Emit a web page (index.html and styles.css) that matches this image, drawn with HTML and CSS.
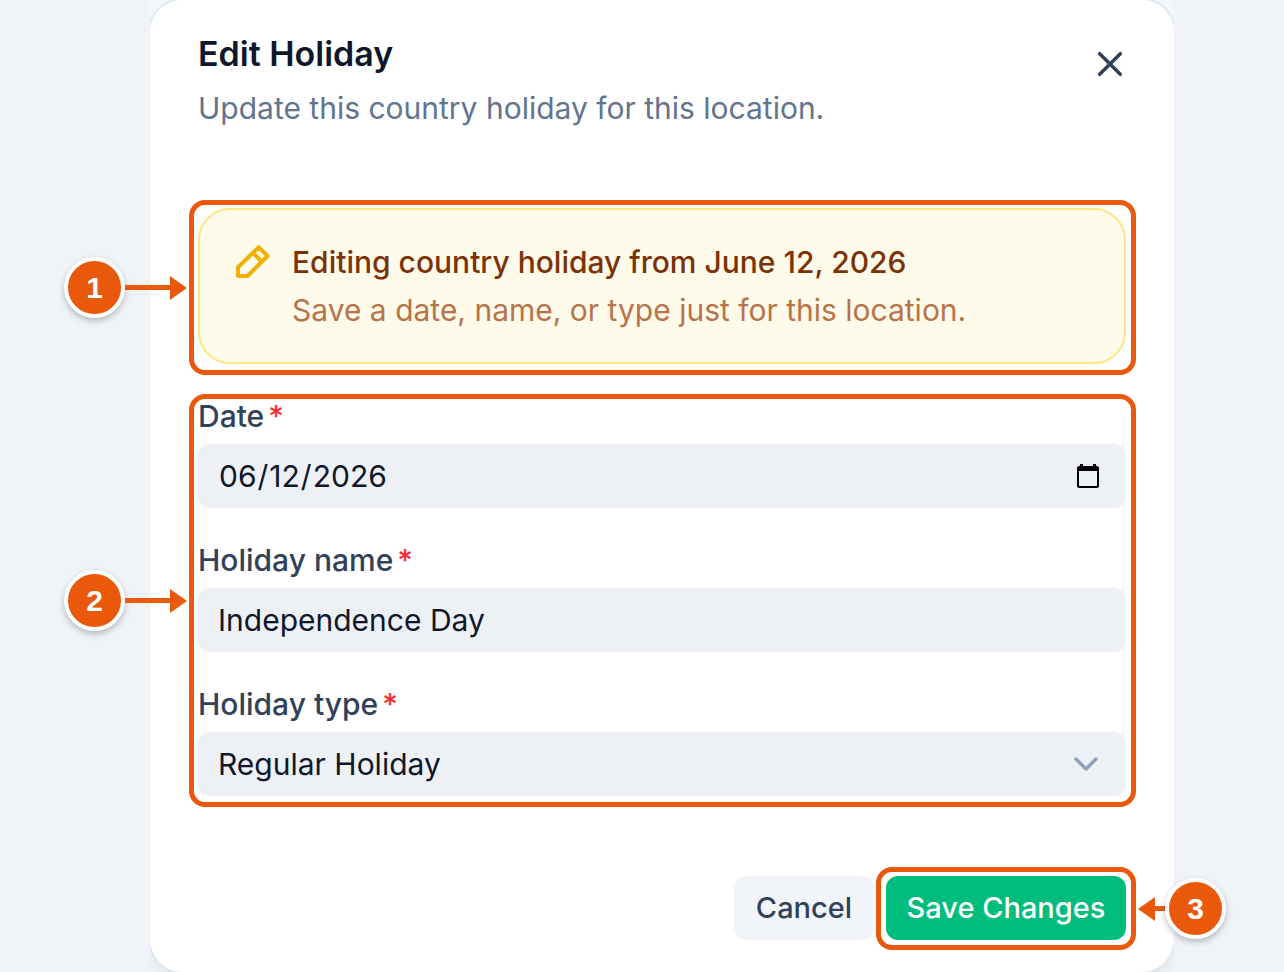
FILE: index.html
```html
<!DOCTYPE html>
<html lang="en">
<head>
    <meta charset="UTF-8">
    <meta name="viewport" content="width=device-width, initial-scale=1">
    <title>Edit Holiday</title>
    <link rel="stylesheet" href="styles.css">
</head>
<body>
    <main class="modal">
        <div class="modal-frame"></div>

        <header class="modal-header">
            <div>
                <h1>Edit Holiday</h1>
                <p>Update this country holiday for this location.</p>
            </div>
            <button type="button" class="close-btn" aria-label="Close">
                <svg width="26" height="26" viewBox="0 0 26 26" fill="none" stroke="currentColor" stroke-width="3.5" stroke-linecap="round"><path d="M2.7 2.7l20.6 20.6M23.3 2.7L2.7 23.3"/></svg>
            </button>
        </header>

        <form class="holiday-form">
            <!-- step 1: notice -->
            <div class="step">
                <div class="notice">
                    <svg class="notice-icon" width="34" height="34" viewBox="0 0 34 34" fill="none" stroke="currentColor" stroke-width="4" stroke-linejoin="round"><path d="M2 31V22.3L22.7 2.2L31.5 11L11.5 31ZM17 7.8l9 9"/></svg>
                    <div>
                        <h2>Editing country holiday from June 12, 2026</h2>
                        <p>Save a date, name, or type just for this location.</p>
                    </div>
                </div>
                <div class="marker"><span class="badge">1</span><span class="line"></span><span class="head"></span></div>
            </div>

            <!-- step 2: fields -->
            <div class="step fields">
                <div class="field">
                    <label for="date">Date<span class="required">*</span></label>
                    <div class="control">
                        <input type="date" id="date" name="date" value="2026-06-12" required>
                        <svg class="control-icon calendar" width="24" height="24" viewBox="0 0 24 24"><path fill="currentColor" fill-rule="evenodd" d="M4 0h3v2h10V0h3v2h1a2 2 0 0 1 2 2v18a2 2 0 0 1-2 2H3a2 2 0 0 1-2-2V4a2 2 0 0 1 2-2h1zM3 7v15h18V7z"/></svg>
                    </div>
                </div>
                <div class="field">
                    <label for="name">Holiday name<span class="required">*</span></label>
                    <div class="control">
                        <input type="text" id="name" name="name" value="Independence Day" required>
                    </div>
                </div>
                <div class="field">
                    <label for="type">Holiday type<span class="required">*</span></label>
                    <div class="control">
                        <select id="type" name="type" required>
                            <option>Regular Holiday</option>
                        </select>
                        <svg class="control-icon chevron" width="28" height="14" viewBox="0 0 28 14" fill="none" stroke="currentColor" stroke-width="3.5" stroke-linecap="round" stroke-linejoin="round"><path d="M2 2l10 10L22 2"/></svg>
                    </div>
                </div>
                <div class="marker"><span class="badge">2</span><span class="line"></span><span class="head"></span></div>
            </div>

            <!-- step 3: save -->
            <div class="actions">
                <button type="button" class="btn cancel-btn">Cancel</button>
                <div class="step step-save">
                    <button type="submit" class="btn save-btn">Save Changes</button>
                    <div class="marker marker-right"><span class="badge">3</span><span class="line"></span><span class="head"></span></div>
                </div>
            </div>
        </form>
    </main>
</body>
</html>
```
FILE: styles.css
```css
* {
    box-sizing: border-box;
}

body {
    margin: 0;
    padding: 0 110px 0 150px;
    background-color: #f0f4f9;
    color: #0f172b;
    font-family: Inter, "Liberation Sans", sans-serif;
    font-size: 30px;
    line-height: 40px;
}

h1, h2, p {
    margin: 0;
}

h1 {
    font-size: 34px;
    font-weight: 600;
    line-height: 44px;
}

h2 {
    font-size: 30px;
    font-weight: 500;
    line-height: 40px;
}

.modal {
    position: relative;
    padding: 32px 48px;
}

.modal-frame {
    position: absolute;
    inset: 0;
    z-index: -1;
    overflow: hidden;
    background-color: #f3f7fb;
}

.modal-frame::before {
    content: "";
    position: absolute;
    inset: -2px;
    bottom: 0;
    border: 2px solid #e2e8f0;
    border-bottom: none;
    border-radius: 34px;
    background-color: #ffffff;
    box-shadow: 0 12px 20px -8px rgba(15, 23, 43, 0.15);
}

.modal-header {
    display: flex;
    justify-content: space-between;
    align-items: flex-start;
}

.modal-header p {
    margin-top: 12px;
    color: #62748e;
}

.close-btn {
    display: flex;
    padding: 19px 3px;
    border: none;
    background: none;
    color: #314158;
    cursor: pointer;
}

.holiday-form {
    margin-top: 80px;
}

.step {
    position: relative;
}

/* orange outline round each step */
.step::before {
    content: "";
    position: absolute;
    inset: -8px -10px -11px -9px;
    border: 5px solid #ea580c;
    border-radius: 16px;
    pointer-events: none;
}

.step-save::before {
    inset: -9px -10px -10px;
}

.notice {
    display: flex;
    gap: 22px;
    padding: 32px 36px;
    border: 2px solid #fee685;
    border-radius: 32px;
    background-color: #fffbeb;
    color: #7b3306;
}

.notice-icon {
    flex: none;
    margin-top: 3px;
    color: #f0b100;
}

.notice p {
    margin-top: 8px;
    color: #b8734a;
}

.fields {
    display: flex;
    flex-direction: column;
    gap: 38px;
    margin-top: 38px;
}

.field label {
    display: block;
    margin-bottom: 14px;
    color: #314158;
    font-weight: 500;
    line-height: 28px;
}

.required {
    margin-left: 4px;
    color: #fb2c36;
}

.control {
    position: relative;
}

.control input,
.control select {
    display: block;
    width: 100%;
    height: 64px;
    padding: 0 20px;
    border: none;
    border-radius: 12px;
    background-color: #edf0f5;
    color: #0f172b;
    font: inherit;
    appearance: none;
}

.control input::-webkit-calendar-picker-indicator {
    opacity: 0;
}

.control-icon {
    position: absolute;
    top: 50%;
    right: 26px;
    transform: translateY(-50%);
    pointer-events: none;
}

.calendar {
    color: #000000;
}

.chevron {
    right: 24px;
    color: #90a1b9;
}

.actions {
    display: flex;
    justify-content: flex-end;
    gap: 12px;
    margin-top: 80px;
}

.btn {
    display: block;
    min-width: 140px;
    height: 64px;
    padding: 0 16px;
    border: none;
    border-radius: 12px;
    font: inherit;
    font-size: 29px;
    font-weight: 500;
    cursor: pointer;
}

.cancel-btn {
    background-color: #f1f5f9;
    color: #314158;
}

.save-btn {
    min-width: 240px;
    background-color: #00bc7d;
    color: #ffffff;
}

/* numbered badge with its arrow, centred on the outline */
.marker {
    position: absolute;
    top: -8px;
    right: 100%;
    bottom: -11px;
    display: flex;
    align-items: center;
    margin-right: 11px;
}

.badge {
    display: flex;
    justify-content: center;
    align-items: center;
    width: 61px;
    height: 61px;
    border: 4px solid #ffffff;
    border-radius: 50%;
    background-color: #ea580c;
    box-shadow: 0 3px 6px rgba(0, 0, 0, 0.25);
    color: #ffffff;
    font-family: "Liberation Sans", sans-serif;
    font-size: 30px;
    font-weight: 700;
}

.line {
    width: 45px;
    height: 5px;
    background-color: #ea580c;
}

.head {
    border-style: solid;
    border-width: 12px 0 12px 17px;
    border-color: transparent transparent transparent #ea580c;
}

.marker-right {
    top: -9px;
    right: auto;
    bottom: -10px;
    left: 100%;
    flex-direction: row-reverse;
    margin: 0 0 0 12px;
}

.marker-right .line {
    width: 10px;
}

.marker-right .head {
    border-width: 12px 17px 12px 0;
    border-color: transparent #ea580c transparent transparent;
}
```
